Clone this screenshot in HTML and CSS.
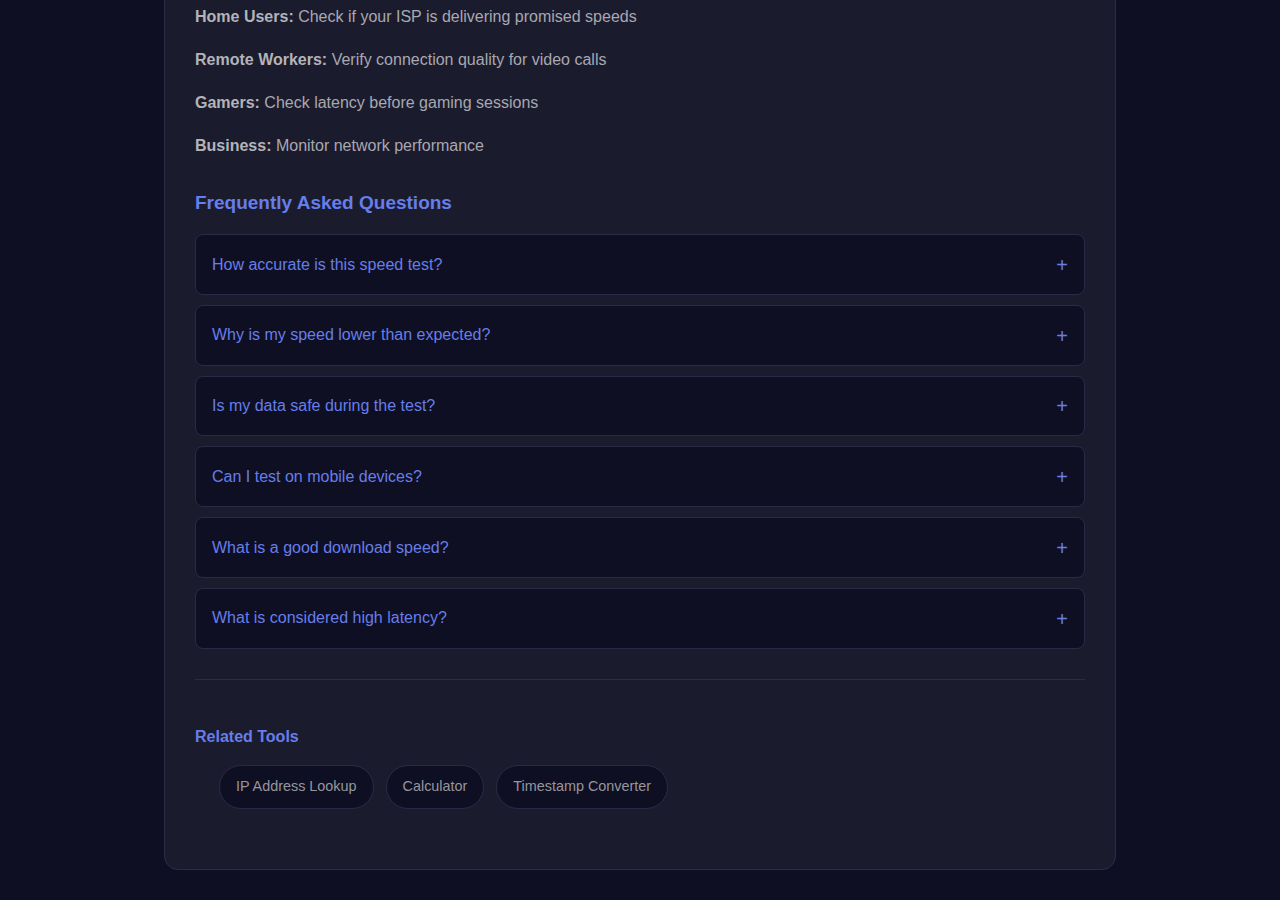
FILE: index.html
```html
<!DOCTYPE html>
<html lang="en">
<head>
<meta charset="utf-8">
<title>Speed Test</title>
<link rel="stylesheet" href="styles.css">
</head>
<body>
<main class="card">
  <ul class="uses">
    <li><strong>Home Users:</strong> Check if your ISP is delivering promised speeds</li>
    <li><strong>Remote Workers:</strong> Verify connection quality for video calls</li>
    <li><strong>Gamers:</strong> Check latency before gaming sessions</li>
    <li><strong>Business:</strong> Monitor network performance</li>
  </ul>

  <h2 class="faq-title">Frequently Asked Questions</h2>
  <div class="faq">
    <div class="faq-item"><span>How accurate is this speed test?</span><span class="plus">+</span></div>
    <div class="faq-item"><span>Why is my speed lower than expected?</span><span class="plus">+</span></div>
    <div class="faq-item"><span>Is my data safe during the test?</span><span class="plus">+</span></div>
    <div class="faq-item"><span>Can I test on mobile devices?</span><span class="plus">+</span></div>
    <div class="faq-item"><span>What is a good download speed?</span><span class="plus">+</span></div>
    <div class="faq-item"><span>What is considered high latency?</span><span class="plus">+</span></div>
  </div>

  <section class="related">
    <h3 class="related-title">Related Tools</h3>
    <ul class="tools">
      <li><a href="#">IP Address Lookup</a></li>
      <li><a href="#">Calculator</a></li>
      <li><a href="#">Timestamp Converter</a></li>
    </ul>
  </section>
</main>
</body>
</html>
```

FILE: styles.css
```css
* { box-sizing: border-box; }
html, body { margin: 0; padding: 0; }
body {
  background: #0f0f23;
  font-family: "Liberation Sans", Arial, sans-serif;
  color: #b0b0b0;
  padding-bottom: 30px;
}
.card {
  width: 952px;
  margin: -52px auto 0;
  background: #1b1b2e;
  border: 1px solid #2c2c4a;
  border-radius: 14px;
  padding: 54px 30px 60px;
}
.uses {
  list-style: none;
  margin: 0;
  padding: 0;
}
.uses li {
  font-size: 16px;
  line-height: 27px;
  margin-bottom: 16px;
  color: #a8a8b0;
}
.uses li strong { color: #b4b4b8; }
.uses li:last-child { margin-bottom: 0; }

.faq-title {
  color: #667eea;
  font-size: 19px;
  line-height: 24px;
  margin: 32px 0 19px;
  font-weight: 700;
}
.faq { display: flex; flex-direction: column; gap: 10px; }
.faq-item {
  display: flex;
  justify-content: space-between;
  align-items: center;
  background: #0f0f23;
  border: 1px solid #2a2a48;
  border-radius: 8px;
  padding: 17.5px 16px 16.5px 16px;
  font-size: 16px;
  line-height: 24.8px;
  color: #667eea;
}
.plus { font-size: 20px; line-height: 20px; color: #667eea; }

.related {
  margin-top: 30px;
  border-top: 1px solid #2c2c4a;
  padding-top: 47px;
}
.related-title {
  color: #667eea;
  font-size: 16px;
  line-height: 20px;
  margin: 0 0 18px;
  font-weight: 700;
}
.tools {
  list-style: none;
  margin: 0;
  padding: 0 0 0 24px;
  display: flex;
  gap: 12px;
}
.tools a {
  display: block;
  text-decoration: none;
  color: #96969e;
  font-size: 14.4px;
  line-height: 17px;
  padding: 12.5px 16px;
  background: #0f0f23;
  border: 1px solid #2a2a48;
  border-radius: 22px;
}
```
